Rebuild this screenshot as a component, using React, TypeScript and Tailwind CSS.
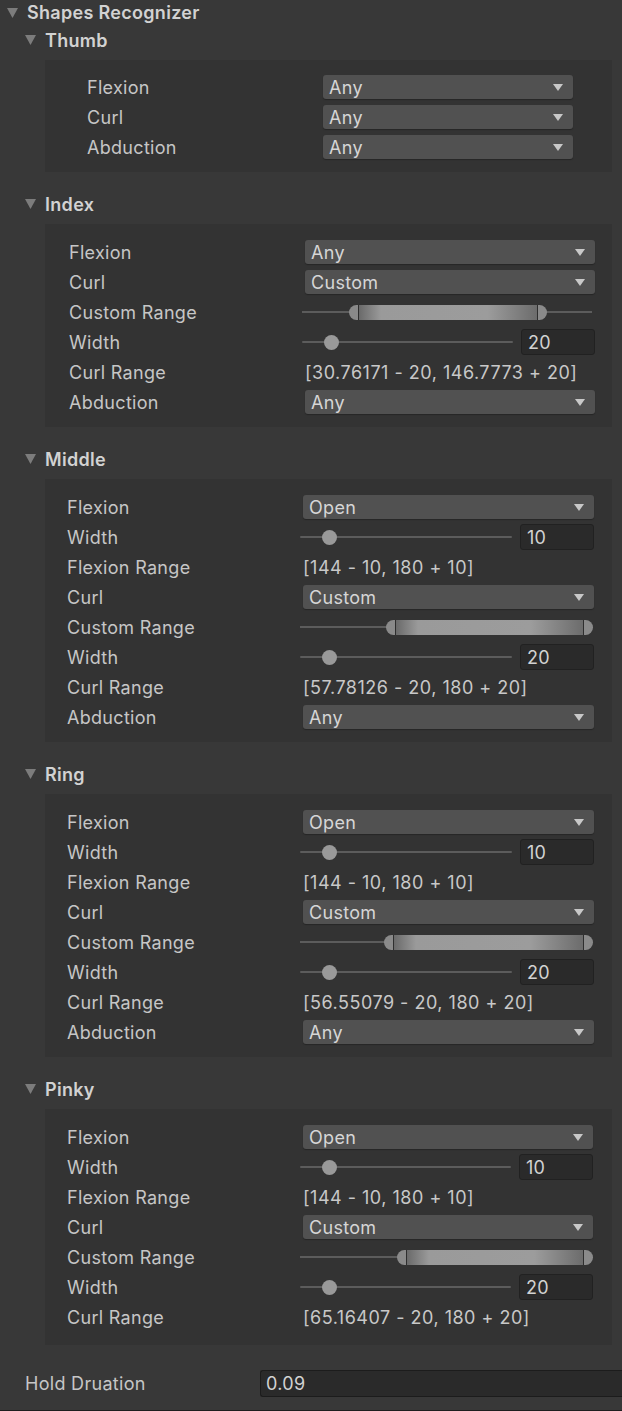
import React from "react";

type Field =
    | { kind: "drop"; label: string; value: string }
    | { kind: "slider"; label: string; value: string }
    | { kind: "range"; label: string; min: number; max: number }
    | { kind: "text"; label: string; value: string };

interface Section {
    name: string;
    pad: string;
    fields: Field[];
}

const curlFields = (flex: string, min: number, curlText: string): Field[] => [
    { kind: "drop", label: "Flexion", value: flex },
    { kind: "slider", label: "Width", value: "10" },
    { kind: "text", label: "Flexion Range", value: "[144 - 10, 180 + 10]" },
    { kind: "drop", label: "Curl", value: "Custom" },
    { kind: "range", label: "Custom Range", min, max: 180 },
    { kind: "slider", label: "Width", value: "20" },
    { kind: "text", label: "Curl Range", value: curlText },
];

const sections: Section[] = [
    {
        name: "Thumb",
        pad: "pl-[42px] pr-[39px] pt-[12px] pb-[10px]",
        fields: [
            { kind: "drop", label: "Flexion", value: "Any" },
            { kind: "drop", label: "Curl", value: "Any" },
            { kind: "drop", label: "Abduction", value: "Any" },
        ],
    },
    {
        name: "Index",
        pad: "pl-[24px] pr-[17px] pt-[13px] pb-[10px]",
        fields: [
            { kind: "drop", label: "Flexion", value: "Any" },
            { kind: "drop", label: "Curl", value: "Custom" },
            { kind: "range", label: "Custom Range", min: 30.76171, max: 146.7773 },
            { kind: "slider", label: "Width", value: "20" },
            { kind: "text", label: "Curl Range", value: "[30.76171 - 20, 146.7773 + 20]" },
            { kind: "drop", label: "Abduction", value: "Any" },
        ],
    },
    {
        name: "Middle",
        pad: "pl-[22px] pr-[18px] pt-[13px] pb-[10px]",
        fields: [
            ...curlFields("Open", 57.78126, "[57.78126 - 20, 180 + 20]"),
            { kind: "drop", label: "Abduction", value: "Any" },
        ],
    },
    {
        name: "Ring",
        pad: "pl-[22px] pr-[18px] pt-[13px] pb-[10px]",
        fields: [
            ...curlFields("Open", 56.55079, "[56.55079 - 20, 180 + 20]"),
            { kind: "drop", label: "Abduction", value: "Any" },
        ],
    },
    {
        name: "Pinky",
        pad: "pl-[22px] pr-[19px] pt-[13px] pb-[13px]",
        fields: curlFields("Open", 65.16407, "[65.16407 - 20, 180 + 20]"),
    },
];

const DropArrow = () => (
    <svg viewBox="0 0 10 7" className="h-[7px] w-[10px] text-[#c8c8c8]">
        <path d="M0 0 H10 L5 7 Z" fill="currentColor" />
    </svg>
);

const Foldout = () => (
    <svg viewBox="0 0 11 10" className="h-[10px] w-[11px] shrink-0 text-[#7c7c7c]">
        <path d="M0 0 H11 L5.5 10 Z" fill="currentColor" />
    </svg>
);

const Dropdown = ({ value }: { value: string }) => (
    <div className="flex h-[24px] w-full items-center justify-between rounded-[3px] bg-[#515151] pl-[6px] pr-[10px] text-[#d6d6d6] shadow-[0_1px_1px_#262626]">
        <span>{value}</span>
        <DropArrow />
    </div>
);

const Slider = ({ value }: { value: string }) => (
    <div className="flex w-full items-center gap-[8px]">
        <div className="relative ml-[-3px] h-[15px] flex-1">
            <div className="absolute left-0 right-0 top-[6px] h-[2px] rounded-full bg-[#5c5c5c]" />
            <div className="absolute left-[22px] top-0 h-[15px] w-[15px] rounded-full bg-[#999999]" />
        </div>
        <div className="flex h-[26px] w-[74px] items-center rounded-[3px] border border-[#212121] bg-[#2a2a2a] pl-[6px] text-[#d2d2d2]">
            {value}
        </div>
    </div>
);

const RangeSlider = ({ min, max }: { min: number; max: number }) => {
    const left = 2 + (min / 180) * 262;
    const width = ((max - min) / 180) * 262 + 29;
    return (
        <div className="relative ml-[-3px] mr-[-2px] h-[16px] w-full">
            <div className="absolute left-0 right-0 top-[7px] h-[2px] bg-[#5c5c5c]" />
            <div
                className="absolute top-[1px] h-[15px] rounded-full bg-[linear-gradient(90deg,#8a8a8a_0px,#8a8a8a_9px,#6a6a6a_10px,#9a9a9a_32px,#9c9c9c_70%,#6c6c6c_calc(100%-10px),#8a8a8a_calc(100%-9px),#8a8a8a_100%)]"
                style={{ left, width }}
            >
                <div className="absolute left-[9px] top-0 h-full w-[1px] bg-[#2e2e2e]" />
                <div className="absolute right-[9px] top-0 h-full w-[1px] bg-[#2e2e2e]" />
            </div>
        </div>
    );
};

const Row = ({ field }: { field: Field }) => (
    <div className="flex h-[30px] items-center">
        <div className="w-[236px] shrink-0 text-[#c6c6c6]">{field.label}</div>
        <div className="flex flex-1 items-center">
            {field.kind === "drop" && <Dropdown value={field.value} />}
            {field.kind === "slider" && <Slider value={field.value} />}
            {field.kind === "range" && <RangeSlider min={field.min} max={field.max} />}
            {field.kind === "text" && (
                <span className="whitespace-nowrap tracking-[0.5px] text-[#c8c8c8]">{field.value}</span>
            )}
        </div>
    </div>
);

export default function App() {
    return (
        <div className="flex h-[1411px] w-full flex-col overflow-hidden bg-[#383838] text-[18px] tracking-[0.3px] font-['Inter','Noto_Sans',sans-serif]">
            <div className="flex h-[25px] items-center gap-[9px] pl-[7px] font-semibold text-[#d2d2d2]">
                <Foldout />
                <span>Shapes Recognizer</span>
            </div>
            <div className="flex flex-col gap-[17px]">
                {sections.map((s) => (
                    <div key={s.name} className="flex flex-col">
                        <div className="flex h-[30px] items-center gap-[9px] pl-[25px] font-semibold text-[#d2d2d2]">
                            <Foldout />
                            <span>{s.name}</span>
                        </div>
                        <div className={`ml-[45px] mt-[5px] w-[567px] bg-[#333333] ${s.pad}`}>
                            {s.fields.map((f, i) => (
                                <Row key={i} field={f} />
                            ))}
                        </div>
                    </div>
                ))}
            </div>
            <div className="mt-[25px] flex h-[27px] items-center">
                <div className="w-[260px] shrink-0 pl-[25px] text-[#c6c6c6]">Hold Druation</div>
                <div className="flex h-[27px] flex-1 items-center rounded-l-[3px] border border-r-0 border-[#1c1c1c] bg-[#2a2a2a] pl-[5px] text-[#d2d2d2]">
                    0.09
                </div>
            </div>
            <div className="flex-1" />
            <div className="h-[1px] bg-[#1e1e1e]" />
        </div>
    );
}
